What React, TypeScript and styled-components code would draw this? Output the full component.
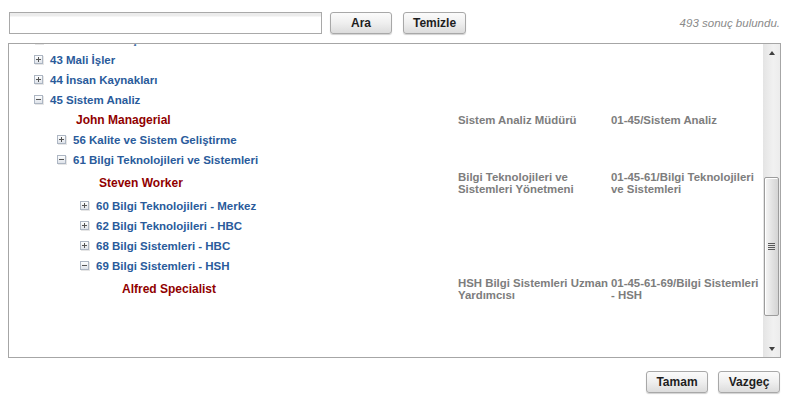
import { useLayoutEffect, useRef } from "react";
import styled, { createGlobalStyle } from "styled-components";

type Person = { type: "person"; name: string; title: string; path: string };
type Unit = { type: "unit"; code: string; name: string; open?: boolean; children?: TreeNode[] };
type TreeNode = Person | Unit;

type FlatRow = { node: TreeNode; depth: number };

const tree: TreeNode[] = [
  { type: "unit", code: "41", name: "Kurumsal İletişim" },
  { type: "unit", code: "42", name: "Kurumsal İlişkiler" },
  { type: "unit", code: "43", name: "Mali İşler" },
  { type: "unit", code: "44", name: "İnsan Kaynakları" },
  {
    type: "unit",
    code: "45",
    name: "Sistem Analiz",
    open: true,
    children: [
      {
        type: "person",
        name: "John Managerial",
        title: "Sistem Analiz Müdürü",
        path: "01-45/Sistem Analiz",
      },
      { type: "unit", code: "56", name: "Kalite ve Sistem Geliştirme" },
      {
        type: "unit",
        code: "61",
        name: "Bilgi Teknolojileri ve Sistemleri",
        open: true,
        children: [
          {
            type: "person",
            name: "Steven Worker",
            title: "Bilgi Teknolojileri ve Sistemleri Yönetmeni",
            path: "01-45-61/Bilgi Teknolojileri ve Sistemleri",
          },
          { type: "unit", code: "60", name: "Bilgi Teknolojileri - Merkez" },
          { type: "unit", code: "62", name: "Bilgi Teknolojileri - HBC" },
          { type: "unit", code: "68", name: "Bilgi Sistemleri - HBC" },
          {
            type: "unit",
            code: "69",
            name: "Bilgi Sistemleri - HSH",
            open: true,
            children: [
              {
                type: "person",
                name: "Alfred Specialist",
                title: "HSH Bilgi Sistemleri Uzman Yardımcısı",
                path: "01-45-61-69/Bilgi Sistemleri - HSH",
              },
            ],
          },
        ],
      },
    ],
  },
];

function flatten(nodes: TreeNode[], depth = 0, out: FlatRow[] = []): FlatRow[] {
  nodes.forEach((node) => {
    out.push({ node, depth });
    if (node.type === "unit" && node.open && node.children) {
      flatten(node.children, depth + 1, out);
    }
  });
  return out;
}

const INDENT = 23;
const BASE = 25;
const SCROLL_TOP = 34;

const GlobalStyle = createGlobalStyle`
  html, body {
    margin: 0;
    padding: 0;
    background: #ffffff;
  }
  body {
    font-family: "Liberation Sans", Arial, sans-serif;
  }
`;

const Page = styled.div`
  width: 789px;
  height: 399px;
  box-sizing: border-box;
  padding: 12px 8px 0 8px;
  display: flex;
  flex-direction: column;
`;

const Toolbar = styled.div`
  display: flex;
  align-items: center;
  height: 22px;
  padding-left: 1px;
`;

const SearchInput = styled.input`
  width: 313px;
  height: 22px;
  box-sizing: border-box;
  border: 1px solid #a9a9a9;
  background: linear-gradient(#ececec 0, #ececec 3px, #ffffff 4px);
  padding: 0 4px;
  font-family: "Liberation Sans", Arial, sans-serif;
  font-size: 12px;
  outline: none;
  margin-right: 8px;
`;

const Button = styled.button<{ $gap?: number }>`
  width: 62px;
  height: 22px;
  box-sizing: border-box;
  margin-right: ${(p) => p.$gap ?? 0}px;
  border: 1px solid #a8a8a8;
  border-radius: 3px;
  background: linear-gradient(#fbfbfb 0%, #efefef 50%, #dcdcdc 100%);
  box-shadow: 0 1px 1px rgba(0, 0, 0, 0.18);
  font-family: "Liberation Sans", Arial, sans-serif;
  font-size: 12px;
  font-weight: 700;
  color: #1e1e1e;
  padding: 0;
  cursor: pointer;
`;

const ResultCount = styled.span`
  margin-left: auto;
  padding-right: 1px;
  font-size: 11.5px;
  font-style: italic;
  color: #8a8a8a;
`;

const Panel = styled.div`
  margin-top: 9px;
  height: 315px;
  box-sizing: border-box;
  border: 1px solid #a6a6a6;
  display: flex;
`;

const Viewport = styled.div`
  flex: 1;
  overflow: hidden;
`;

const TreeList = styled.div`
  padding-bottom: 60px;
`;

const Row = styled.div`
  display: grid;
  grid-template-columns: 449px 153px 1fr;
  align-items: center;
  min-height: 20px;
`;

const UnitCell = styled.div<{ $depth: number }>`
  display: flex;
  align-items: center;
  gap: 6px;
  padding-left: ${(p) => BASE + INDENT * p.$depth}px;
  font-size: 11.5px;
  font-weight: 700;
  color: #2a5b9b;
  white-space: nowrap;
`;

const PersonName = styled.div<{ $depth: number }>`
  padding-left: ${(p) => BASE + INDENT * p.$depth + 19}px;
  font-size: 12px;
  font-weight: 700;
  color: #900000;
  white-space: nowrap;
`;

const InfoCell = styled.div`
  padding: 1px 0;
  font-size: 11.4px;
  line-height: 12px;
  font-weight: 700;
  color: #7d7d7d;
`;

const ScrollBar = styled.div`
  width: 17px;
  display: flex;
  flex-direction: column;
  background: linear-gradient(to right, #e4e4e4, #f1f1f1 60%, #ececec);
`;

const ArrowButton = styled.div<{ $down?: boolean }>`
  height: 17px;
  display: flex;
  align-items: center;
  justify-content: center;

  &::before {
    content: "";
    width: 0;
    height: 0;
    border-left: 3.5px solid transparent;
    border-right: 3.5px solid transparent;
    ${(p) => (p.$down ? "border-top" : "border-bottom")}: 4px solid #404040;
  }
`;

const Track = styled.div`
  flex: 1;
  display: flex;
  flex-direction: column;
`;

const Thumb = styled.div`
  margin: 0 1px;
  box-sizing: border-box;
  border: 1px solid #9c9c9c;
  border-radius: 2px;
  background: linear-gradient(to right, #f6f6f6, #e2e2e2 55%, #d4d4d4);
  box-shadow: inset 1px 1px 0 #ffffff;
  display: flex;
  align-items: center;
  justify-content: center;
`;

const Footer = styled.div`
  display: flex;
  justify-content: flex-end;
  gap: 10px;
  margin-top: 13px;
  padding-right: 1px;
`;

function ToggleIcon({ open }: { open?: boolean }) {
  return (
    <svg width="10" height="10" viewBox="0 0 10 10" style={{ flexShrink: 0 }}>
      <defs>
        <linearGradient id="tg" x1="0" y1="0" x2="0" y2="1">
          <stop offset="0" stopColor="#ffffff" />
          <stop offset="1" stopColor="#dde2e9" />
        </linearGradient>
      </defs>
      <rect x="1" y="1" width="9" height="9" fill="#e6e6e6" />
      <rect x="0.5" y="0.5" width="8" height="8" fill="url(#tg)" stroke="#adb6c3" />
      <path d="M2 4.5h5" stroke="#555" />
      {!open && <path d="M4.5 2v5" stroke="#555" />}
    </svg>
  );
}

function Grip() {
  return (
    <svg width="7" height="7" viewBox="0 0 7 7">
      <path d="M0 0.5h7M0 2.5h7M0 4.5h7M0 6.5h7" stroke="#5a5a5a" />
    </svg>
  );
}

function TreeRow({ row }: { row: FlatRow }) {
  const { node, depth } = row;
  if (node.type === "unit") {
    return (
      <Row>
        <UnitCell $depth={depth}>
          <ToggleIcon open={node.open} />
          <span>
            {node.code} {node.name}
          </span>
        </UnitCell>
      </Row>
    );
  }
  return (
    <Row>
      <PersonName $depth={depth}>{node.name}</PersonName>
      <InfoCell>{node.title}</InfoCell>
      <InfoCell>{node.path}</InfoCell>
    </Row>
  );
}

export default function App() {
  const viewportRef = useRef<HTMLDivElement>(null);
  const rows = flatten(tree);

  useLayoutEffect(() => {
    if (viewportRef.current) viewportRef.current.scrollTop = SCROLL_TOP;
  }, []);

  return (
    <Page>
      <GlobalStyle />
      <Toolbar>
        <SearchInput type="text" />
        <Button $gap={11}>Ara</Button>
        <Button style={{ width: 63 }}>Temizle</Button>
        <ResultCount>493 sonuç bulundu.</ResultCount>
      </Toolbar>

      <Panel>
        <Viewport ref={viewportRef}>
          <TreeList>
            {rows.map((row, i) => (
              <TreeRow key={i} row={row} />
            ))}
          </TreeList>
        </Viewport>
        <ScrollBar>
          <ArrowButton />
          <Track>
            <Thumb style={{ marginTop: 116, height: 139 }}>
              <Grip />
            </Thumb>
          </Track>
          <ArrowButton $down />
        </ScrollBar>
      </Panel>

      <Footer>
        <Button>Tamam</Button>
        <Button>Vazgeç</Button>
      </Footer>
    </Page>
  );
}
